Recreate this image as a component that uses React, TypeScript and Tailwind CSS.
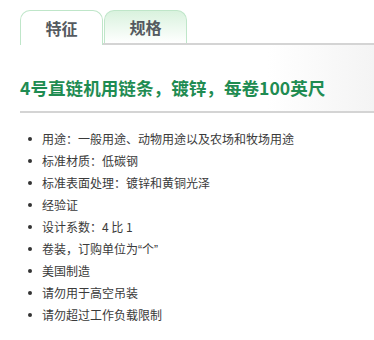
import React, { useState } from "react";

const features: React.ReactNode[] = [
  "用途：一般用途、动物用途以及农场和牧场用途",
  "标准材质：低碳钢",
  "标准表面处理：镀锌和黄铜光泽",
  "经验证",
  "设计系数：4 比 1",
  <>
    卷装，订购单位为
    <span style={{ fontFamily: '"Liberation Sans", sans-serif' }}>“</span>个
    <span style={{ fontFamily: '"Liberation Sans", sans-serif' }}>”</span>
  </>,
  "美国制造",
  "请勿用于高空吊装",
  "请勿超过工作负载限制",
];

const App = () => {
  const [tab, setTab] = useState("features");

  return (
    <div
      className="w-[374px] h-[340px] bg-white pl-[20px] overflow-hidden"
      style={{ fontFamily: '"Noto Sans CJK SC", "Noto Sans", sans-serif' }}
    >
      {/* Tabs */}
      <div className="flex items-end pt-[10px]">
        <button
          onClick={() => setTab("features")}
          className="w-[83px] h-[35px] rounded-t-[10px] border border-b-0 border-[#bfe6c9] bg-white text-[16px] font-bold text-[#555a60] flex items-center justify-center"
        >
          特征
        </button>
        <div className="flex-1 flex items-end border-b-2 border-[#d4d4d4]">
          <button
            onClick={() => setTab("specs")}
            className="ml-[1px] w-[83px] h-[33px] rounded-t-[10px] border border-b-0 border-[#bfe6c9] bg-gradient-to-b from-[#d9f2de] to-white text-[16px] font-bold text-[#555a60] flex items-center justify-center"
          >
            规格
          </button>
        </div>
      </div>

      {/* Title */}
      <div className="pt-[31px] pb-[11px] border-b-2 border-[#d4d4d4] bg-gradient-to-r from-white from-70% to-[#f4f4f4]">
        <h1 className="text-[17.6px] leading-[24px] font-bold text-[#1f8c52]">
          4号直链机用链条，镀锌，每卷100英尺
        </h1>
      </div>

      {/* Feature list */}
      {tab === "features" && (
        <ul className="mt-[15px]">
          {features.map((item, i) => (
            <li key={i} className="flex items-center h-[22px] text-[12px] text-[#3a3a3a]">
              <span className="ml-[8px] mr-[10px] w-[4px] h-[4px] rounded-full bg-[#333]" />
              <span>{item}</span>
            </li>
          ))}
        </ul>
      )}
    </div>
  );
};

export default App;
